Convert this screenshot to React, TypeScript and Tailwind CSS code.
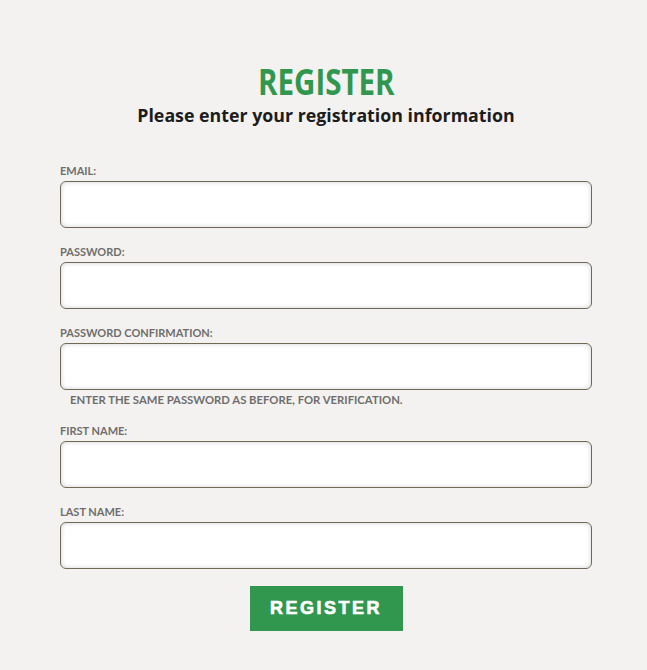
import React from "react";

const Field = ({ label, help, type = "text" }: { label: string; help?: string; type?: string }) => (
  <div className="flex flex-col">
    <label className="text-[11px] leading-[14px] font-bold text-[#6f6e6c] uppercase mb-[3px]" style={{ fontFamily: "Lato, sans-serif" }}>
      {label}
    </label>
    <input
      type={type}
      className="h-[47px] w-full rounded-[6px] border border-[#706a55] bg-white shadow-[inset_0_0_5px_rgba(0,0,0,0.18)] outline-none"
    />
    {help && (
      <p className="mt-[3px] pl-[10px] text-[11.3px] leading-[14px] font-bold text-[#6f6e6c] uppercase" style={{ fontFamily: "Lato, sans-serif" }}>
        {help}
      </p>
    )}
  </div>
);

export default function App() {
  return (
    <div className="min-h-[670px] w-full bg-[#f3f2f0]">
      <div className="ml-[60px] w-[532px] pt-[63px] flex flex-col">
        <h1 className="flex justify-center h-[38px]">
          <span
            className="inline-block scale-x-[0.82] text-[36px] leading-[38px] font-bold text-[#31974f]"
            style={{ fontFamily: '"Open Sans", sans-serif' }}
          >
            REGISTER
          </span>
        </h1>
        <h2 className="text-center text-[17.8px] leading-[24px] font-bold text-[#1c1c1c] mt-[2px]" style={{ fontFamily: '"Open Sans", sans-serif' }}>
          Please enter your registration information
        </h2>
        <form className="mt-[37px] flex flex-col gap-[17px]">
          <Field label="Email:" type="email" />
          <Field label="Password:" type="password" />
          <Field label="Password confirmation:" type="password" help="Enter the same password as before, for verification." />
          <Field label="First name:" />
          <Field label="Last name:" />
          <div className="flex justify-center">
            <button
              type="button"
              className="w-[153px] h-[45px] bg-[#31974f] text-white text-[18px] font-bold tracking-[2.5px] [-webkit-text-stroke:0.6px_white]"
              style={{ fontFamily: '"Liberation Sans", Arial, sans-serif' }}
            >
              REGISTER
            </button>
          </div>
        </form>
      </div>
    </div>
  );
}
